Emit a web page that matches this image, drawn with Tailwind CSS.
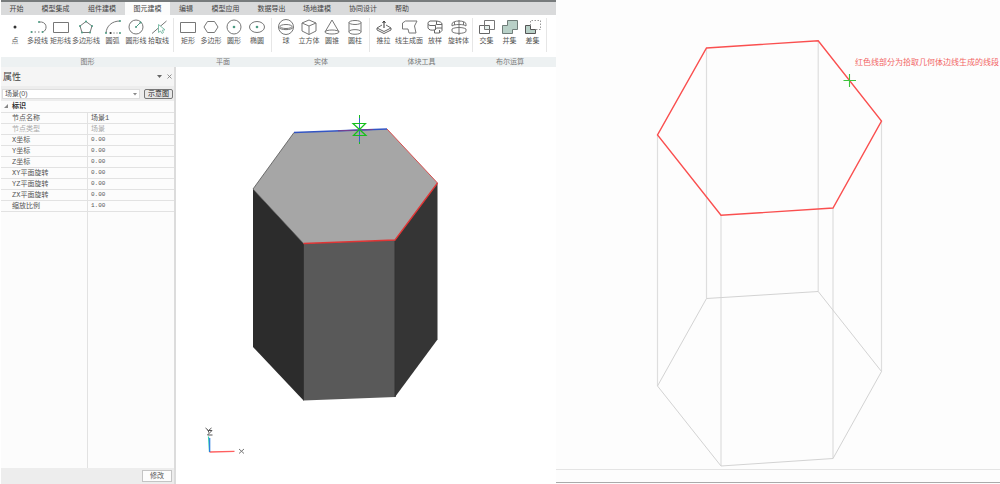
<!DOCTYPE html>
<html lang="zh-CN">
<head>
<meta charset="utf-8">
<meta name="viewport" content="width=device-width, initial-scale=1">
<title>图元建模</title>
<script src="https://cdn.jsdelivr.net/npm/@tailwindcss/browser@4"></script>
</head>
<body class="flex min-h-screen bg-white font-['Liberation_Sans','Noto_Sans_CJK_SC',sans-serif] text-[7px] leading-[10px] text-[#555]">

<main class="flex w-[55.6%] shrink-0 flex-col pl-px">
  <header>
    <nav class="flex h-[15px] border-t-2 border-[#777b7c] bg-[#d9dadb] text-[#444]" aria-label="功能区">
      <button class="w-[31px]">开始</button>
      <button class="w-[47px]">模型集成</button>
      <button class="w-[46px]">组件建模</button>
      <button class="w-[45px] bg-[#fcfcfc]">图元建模</button>
      <button class="w-[32px]">编辑</button>
      <button class="w-[47px]">模型应用</button>
      <button class="w-[45px]">数据导出</button>
      <button class="w-[46px]">场地建模</button>
      <button class="w-[46px]">协同设计</button>
      <button class="w-[32px]">帮助</button>
    </nav>

    <div class="flex h-[52px] bg-white">
      <section class="flex w-[173px] flex-col">
        <div class="mt-[3px] flex h-[34px] justify-center border-r border-[#e6e6e6]">
          <button class="flex w-[22px] flex-col items-center whitespace-nowrap"><svg class="h-[18px] w-[22px]" viewBox="0 0 22 18"><circle cx="11" cy="9" r="1.5" fill="#333"/></svg>点</button>
          <button class="flex w-[23px] flex-col items-center whitespace-nowrap"><svg class="h-[18px] w-[22px]" viewBox="0 0 22 18" fill="none"><path d="M12 4C21 3 20.500 13 15.500 14" stroke="#777"/><path d="M4 14h10" stroke="#777" stroke-dasharray="1.500 2"/><g fill="#4d9b83"><circle cx="12" cy="4" r="1"/><circle cx="4.500" cy="14" r="1"/><circle cx="15.500" cy="14" r="1"/></g></svg>多段线</button>
          <button class="flex w-[23px] flex-col items-center whitespace-nowrap"><svg class="h-[18px] w-[22px]" viewBox="0 0 22 18" fill="none"><path d="M3.500 4.500h15v10h-15z" stroke="#777"/></svg>矩形线</button>
          <button class="flex w-[28px] flex-col items-center whitespace-nowrap"><svg class="h-[18px] w-[22px]" viewBox="0 0 22 18" fill="none"><path d="M11 3.500L17 8l-2 6.500H7L5 8z" stroke="#777"/><g fill="#4d9b83"><circle cx="11" cy="3.500" r="1"/><circle cx="17" cy="8" r="1"/><circle cx="15" cy="14.500" r="1"/><circle cx="7" cy="14.500" r="1"/><circle cx="5" cy="8" r="1"/></g></svg>多边形线</button>
          <button class="flex w-[25px] flex-col items-center whitespace-nowrap"><svg class="h-[18px] w-[22px]" viewBox="0 0 22 18" fill="none"><path d="M4 15C4.500 8 10 3 18 3" stroke="#777"/><path d="M8 15h10" stroke="#aaa" stroke-dasharray="2 1"/><g fill="#4d9b83"><circle cx="4" cy="15" r="1"/><circle cx="18" cy="3" r="1"/><circle cx="18" cy="15" r="1"/></g><circle cx="8.500" cy="15" r="1" fill="#333"/></svg>圆弧</button>
          <button class="flex w-[22px] flex-col items-center whitespace-nowrap"><svg class="h-[18px] w-[22px]" viewBox="0 0 22 18" fill="none"><circle cx="11" cy="9" r="7" stroke="#777"/><path d="M11 9l4.500-4.500" stroke="#4d9b83"/><g fill="#4d9b83"><circle cx="11" cy="9" r="1"/><circle cx="15.500" cy="4.500" r="1"/></g></svg>圆形线</button>
          <button class="flex w-[23px] flex-col items-center whitespace-nowrap"><svg class="h-[18px] w-[22px]" viewBox="0 0 22 18" fill="none"><path d="M4 15.500L18.500 3" stroke="#777"/><path d="M10.500 6.500v8l2-1.500 1.500 2.500 1.500-1-1.200-2.300 2.700-.4z" fill="#fff" stroke="#73b7a0" stroke-width=".9"/></svg>拾取线</button>
        </div>
        <h2 class="mt-auto bg-[#edf1f2] text-center text-[#777]">图形</h2>
      </section>

      <section class="flex w-[98px] flex-col">
        <div class="mt-[3px] flex h-[34px] justify-center border-r border-[#e6e6e6]">
          <button class="flex w-[23px] flex-col items-center whitespace-nowrap"><svg class="h-[18px] w-[22px]" viewBox="0 0 22 18" fill="none"><path d="M3.500 4.500h15v10h-15z" stroke="#777"/></svg>矩形</button>
          <button class="flex w-[23px] flex-col items-center whitespace-nowrap"><svg class="h-[18px] w-[22px]" viewBox="0 0 22 18" fill="none"><path d="M4 9l3.500-5.500h7L18 9l-3.500 5.500h-7z" stroke="#777"/></svg>多边形</button>
          <button class="flex w-[23px] flex-col items-center whitespace-nowrap"><svg class="h-[18px] w-[22px]" viewBox="0 0 22 18" fill="none"><circle cx="11" cy="9" r="7" stroke="#777"/><circle cx="11" cy="9" r="1.300" fill="#4d9b83"/></svg>圆形</button>
          <button class="flex w-[23px] flex-col items-center whitespace-nowrap"><svg class="h-[18px] w-[22px]" viewBox="0 0 22 18" fill="none"><ellipse cx="11" cy="9" rx="7.500" ry="5.500" stroke="#777"/><circle cx="11" cy="9" r="1.300" fill="#4d9b83"/></svg>椭圆</button>
        </div>
        <h2 class="mt-auto bg-[#edf1f2] text-center text-[#777]">平面</h2>
      </section>

      <section class="flex w-[98px] flex-col">
        <div class="mt-[3px] flex h-[34px] justify-center border-r border-[#e6e6e6]">
          <button class="flex w-[23px] flex-col items-center whitespace-nowrap"><svg class="h-[18px] w-[22px]" viewBox="0 0 22 18" fill="none" stroke="#777"><circle cx="11" cy="9" r="7.500"/><ellipse cx="11" cy="8.500" rx="6" ry="2"/><path d="M3.500 9c1 3.500 14 3.500 15 0"/></svg>球</button>
          <button class="flex w-[23px] flex-col items-center whitespace-nowrap"><svg class="h-[18px] w-[22px]" viewBox="0 0 22 18" fill="none" stroke="#777"><path d="M11 2l7 3v8l-7 3.500L4 13V5zM4 5l7 3 7-3M11 8v8.500"/></svg>立方体</button>
          <button class="flex w-[23px] flex-col items-center whitespace-nowrap"><svg class="h-[18px] w-[22px]" viewBox="0 0 22 18" fill="none" stroke="#777"><path d="M4 14l7-12 7 12"/><ellipse cx="11" cy="14" rx="7" ry="2"/></svg>圆锥</button>
          <button class="flex w-[23px] flex-col items-center whitespace-nowrap"><svg class="h-[18px] w-[22px]" viewBox="0 0 22 18" fill="none" stroke="#777"><ellipse cx="11" cy="4.500" rx="6" ry="2"/><path d="M5 4.500V14c0 3 12 3 12 0V4.500M5 13.500c1-2.500 11-2.500 12 0"/></svg>圆柱</button>
        </div>
        <h2 class="mt-auto bg-[#edf1f2] text-center text-[#777]">实体</h2>
      </section>

      <section class="flex w-[103px] flex-col">
        <div class="mt-[3px] flex h-[34px] justify-center border-r border-[#e6e6e6]">
          <button class="flex w-[23px] flex-col items-center whitespace-nowrap"><svg class="h-[18px] w-[22px]" viewBox="0 0 22 18" fill="none" stroke="#666"><path d="M9 7l-5 3 7 3.500L18 10l-5-3M4 10v2l7 3.500L18 12v-2"/><path d="M11 10V3.500M9.500 5L11 3l1.500 2" stroke="#333"/></svg>推拉</button>
          <button class="flex w-[28px] flex-col items-center whitespace-nowrap"><svg class="h-[18px] w-[22px]" viewBox="0 0 22 18" fill="none"><path d="M4.500 5L7.500 3H19l-2.500 5L18 15h-7l-1-4H4.500z" stroke="#777"/></svg>线生成面</button>
          <button class="flex w-[24px] flex-col items-center whitespace-nowrap"><svg class="h-[18px] w-[22px]" viewBox="0 0 22 18" fill="none" stroke="#666"><path d="M4 4.500L6 3h6.500v3l-1 1.500H6L4 6.500zM4 6.500V10c1 2 3 2.500 6.500 2v3h5L18 12.500V6c0-1.500-2-2.500-5.500-3M11.500 7.500v4.500M10.500 12l2-2H18M12.500 6.500H18M15.500 15v-3"/></svg>放样</button>
          <button class="flex w-[23px] flex-col items-center whitespace-nowrap"><svg class="h-[18px] w-[22px]" viewBox="0 0 22 18" fill="none" stroke="#666"><path d="M4 8V6c0-4 14-4 14 0v2c-2-2-12-2-14 0M4 11c3-2 11-2 14 0v2.500c-2 2.500-12 2.500-14 0zM11 2v15M6.500 4v3M15.500 4v3" stroke-width=".9"/></svg>旋转体</button>
        </div>
        <h2 class="mt-auto bg-[#edf1f2] text-center text-[#777]">体块工具</h2>
      </section>

      <section class="flex w-[74px] flex-col">
        <div class="mt-[3px] flex h-[34px] justify-center border-r border-[#e6e6e6]">
          <button class="flex w-[23px] flex-col items-center whitespace-nowrap"><svg class="h-[18px] w-[22px]" viewBox="0 0 22 18" fill="none"><path d="M8.500 7.500h5v4h-5z" fill="#e1ece8"/><path d="M3.500 7.500h10v8h-10z" stroke="#666"/><path d="M8.500 2.500h10v9h-10z" stroke="#777"/></svg>交集</button>
          <button class="flex w-[23px] flex-col items-center whitespace-nowrap"><svg class="h-[18px] w-[22px]" viewBox="0 0 22 18"><path d="M3.500 7.500h5v-5h10v9h-5v4h-10z" fill="#b8d0c7" stroke="#6f7d79"/></svg>并集</button>
          <button class="flex w-[23px] flex-col items-center whitespace-nowrap"><svg class="h-[18px] w-[22px]" viewBox="0 0 22 18" fill="none"><path d="M3.500 7.500h5v4h5v4h-10z" fill="#b8d0c7" stroke="#555"/><path d="M8.500 7.500v-5h10v9h-5" stroke="#999" stroke-dasharray="1.500 1.500"/></svg>差集</button>
        </div>
        <h2 class="mt-auto bg-[#edf1f2] text-center text-[#777]">布尔运算</h2>
      </section>
      <div class="mt-auto h-[10px] flex-1 bg-[#edf1f2]"></div>
    </div>
  </header>

  <div class="flex flex-1">
    <aside class="flex w-[175px] shrink-0 flex-col border-r-2 border-[#dcdcdc] bg-[#fcfcfc]">
      <div class="flex h-[19px] items-center gap-[5px] bg-[#f5f5f5] px-[2px]">
        <h1 class="mr-auto text-[9px] text-[#444]">属性</h1>
        <button aria-label="面板选项"><svg class="size-[5px]" viewBox="0 0 5 5"><path d="M0 1h5L2.500 4z" fill="#666"/></svg></button>
        <button aria-label="关闭"><svg class="size-[5px]" viewBox="0 0 5 5"><path d="M.5.5l4 4m0-4l-4 4" stroke="#777" stroke-width=".8"/></svg></button>
      </div>
      <div class="flex h-[15px] items-center gap-[4px] bg-[#ededed] px-px">
        <div class="relative h-[10px] flex-1">
          <select aria-label="节点" class="block h-[10px] w-full appearance-none border border-[#ddd] bg-white px-[2px] leading-[8px]"><option>场景(0)</option></select>
          <svg class="pointer-events-none absolute right-[3px] top-[3px] size-[4px]" viewBox="0 0 4 4"><path d="M0 1h4L2 3.500z" fill="#888"/></svg>
        </div>
        <button class="h-[10px] w-[29px] rounded-[2px] border border-[#777] bg-[#e8e8e8] leading-[8px] text-[#222]">示意图</button>
      </div>
      <table class="w-full table-fixed border-collapse text-left font-['Liberation_Mono','Noto_Sans_CJK_SC',monospace]">
        <colgroup><col class="w-1/2"><col class="w-1/2"></colgroup>
        <thead><tr class="h-[11px] border-b border-[#e2e2e2] text-[#333]"><th colspan="2" class="p-0 font-bold"><span class="flex items-center gap-[4px] pl-[3px]"><svg class="size-[4px]" viewBox="0 0 4 4"><path d="M4 0v4H0z" fill="#888"/></svg>标识</span></th></tr></thead>
        <tbody>
          <tr class="h-[11px] border-b border-[#e2e2e2]"><th class="border-r border-[#e2e2e2] p-0 pl-[11px] font-normal">节点名称</th><td class="p-0 pl-[3px]">场景1</td></tr>
          <tr class="h-[11px] border-b border-[#e2e2e2] text-[#aaa]"><th class="border-r border-[#e2e2e2] p-0 pl-[11px] font-normal">节点类型</th><td class="p-0 pl-[3px]">场景</td></tr>
          <tr class="h-[11px] border-b border-[#e2e2e2]"><th class="border-r border-[#e2e2e2] p-0 pl-[11px] font-normal">X坐标</th><td class="p-0 pl-[3px] text-[6px]">0.00</td></tr>
          <tr class="h-[11px] border-b border-[#e2e2e2]"><th class="border-r border-[#e2e2e2] p-0 pl-[11px] font-normal">Y坐标</th><td class="p-0 pl-[3px] text-[6px]">0.00</td></tr>
          <tr class="h-[11px] border-b border-[#e2e2e2]"><th class="border-r border-[#e2e2e2] p-0 pl-[11px] font-normal">Z坐标</th><td class="p-0 pl-[3px] text-[6px]">0.00</td></tr>
          <tr class="h-[11px] border-b border-[#e2e2e2]"><th class="border-r border-[#e2e2e2] p-0 pl-[11px] font-normal">XY平面旋转</th><td class="p-0 pl-[3px] text-[6px]">0.00</td></tr>
          <tr class="h-[11px] border-b border-[#e2e2e2]"><th class="border-r border-[#e2e2e2] p-0 pl-[11px] font-normal">YZ平面旋转</th><td class="p-0 pl-[3px] text-[6px]">0.00</td></tr>
          <tr class="h-[11px] border-b border-[#e2e2e2]"><th class="border-r border-[#e2e2e2] p-0 pl-[11px] font-normal">ZX平面旋转</th><td class="p-0 pl-[3px] text-[6px]">0.00</td></tr>
          <tr class="h-[11px] border-b border-[#e2e2e2]"><th class="border-r border-[#e2e2e2] p-0 pl-[11px] font-normal">缩放比例</th><td class="p-0 pl-[3px] text-[6px]">1.00</td></tr>
        </tbody>
      </table>
      <div class="grid flex-1 grid-cols-2"><div class="border-r border-[#e2e2e2]"></div></div>
      <div class="flex h-[16px] items-center justify-end bg-[#ededed] px-[2px]">
        <button class="h-[12px] w-[30px] border border-[#c4c4c4] bg-[#fcfcfc]">修改</button>
      </div>
    </aside>

    <svg class="min-w-0 flex-1 bg-white" viewBox="176 67 380 417" preserveAspectRatio="xMinYMin meet" role="img" aria-label="六棱柱实体">
      <path d="M253 189l51 54.500V401l-51-54z" fill="#2c2c2c"/>
      <path d="M303.500 243.500l92-3.500V397l-92 3.500z" fill="#595959"/>
      <path d="M395 240l42.500-57v156.500L395 397z" fill="#353535"/>
      <path d="M294 132.500l93-3.500 50.500 54L395 240l-91.500 3.500L253 189z" fill="#a6a6a6"/>
      <path d="M294 132.500L253 189l50.500 54.500" fill="none" stroke="#555" stroke-width=".8"/>
      <path d="M303.500 244v156M395 241v156" stroke="#333"/>
      <path d="M303.500 243.500L395 240l42.500-57" fill="none" stroke="#e03535" stroke-width="1.300"/>
      <path d="M387 129l50.500 54" stroke="#d95050"/>
      <path d="M294 132.500l93-3.500" stroke="#3355c4" stroke-width="1.500"/>
      <path d="M338 130.800l35-1.300" stroke="#7a3f8e"/>
      <path d="M359.500 115v29" stroke="#16c01c"/>
      <path d="M359.500 118v24" stroke="#3a62c8"/>
      <path d="M353 123.500h12.500l-12 12h12.500z" fill="none" stroke="#16c01c" stroke-width="1.200"/>
      <path d="M209.500 452l25-.6" stroke="#ff6060" stroke-width="1.300"/>
      <path d="M208.500 436.500l1 15.500" stroke="#35d0b0" stroke-width="1.200"/>
      <path d="M209.700 438v14" stroke="#2878e0" stroke-width="1.200"/>
      <path d="M239 449l5 4.500m0-4.500l-5 4.500" stroke="#777"/>
      <path d="M205.500 428l3 2.500 3-2.500M208.500 430.500v2M207.500 430.500h4.500l-4.500 4.500h5" fill="none" stroke="#555"/>
    </svg>
  </div>
</main>

<section class="flex min-w-0 flex-1 flex-col bg-[#fdfdfd]">
  <svg class="w-full flex-1" viewBox="556 0 444 484" preserveAspectRatio="xMinYMin meet" role="img" aria-label="拾取线段线框">
    <path d="M657.500 135v251M706.500 48v250.500M721 215v251M818.200 41v250.500M833 208v250.500M881.500 121v250.500" stroke="#dedede" stroke-width="1.200"/>
    <path d="M706.500 298.500l111.700-7 63.300 80L833 458.500 721 466l-63.500-80z" fill="none" stroke="#d3d3d3"/>
    <path d="M706.500 48l111.700-7.200 63.300 80.200L833 208l-112 7.300-63.500-80.300z" fill="none" stroke="#fa4f4f" stroke-width="1.400"/>
    <path d="M843.500 80.500H856M849.500 74v13" stroke="#3cc43c" stroke-width="1.100"/>
    <text x="999" y="65" text-anchor="end" font-size="8" fill="#f26464">红色线部分为拾取几何体边线生成的线段</text>
    <path d="M556 469.500h444" stroke="#e4e4e4"/>
    <path d="M556 482.500h444" stroke="#aaa" stroke-width="1.200"/>
  </svg>
</section>
</body>
</html>
